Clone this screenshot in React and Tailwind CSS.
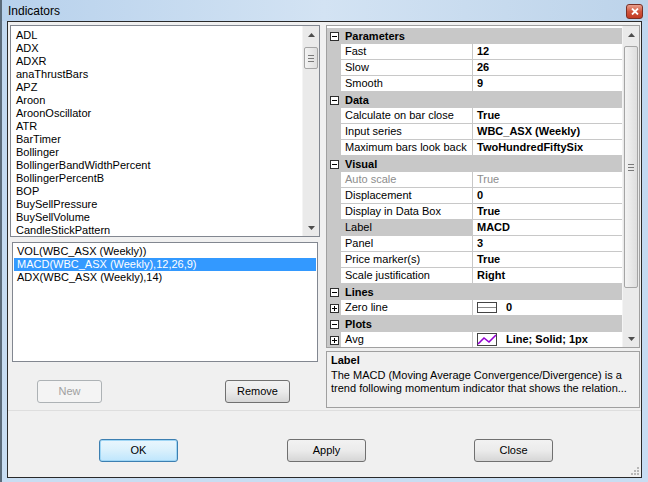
import React from "react";

const INDICATORS = [
  "ADL",
  "ADX",
  "ADXR",
  "anaThrustBars",
  "APZ",
  "Aroon",
  "AroonOscillator",
  "ATR",
  "BarTimer",
  "Bollinger",
  "BollingerBandWidthPercent",
  "BollingerPercentB",
  "BOP",
  "BuySellPressure",
  "BuySellVolume",
  "CandleStickPattern",
];

const APPLIED = [
  "VOL(WBC_ASX (Weekly))",
  "MACD(WBC_ASX (Weekly),12,26,9)",
  "ADX(WBC_ASX (Weekly),14)",
];

const PROPS = [
  { cat: "Parameters" },
  { name: "Fast", value: "12" },
  { name: "Slow", value: "26" },
  { name: "Smooth", value: "9" },
  { cat: "Data" },
  { name: "Calculate on bar close", value: "True" },
  { name: "Input series", value: "WBC_ASX (Weekly)" },
  { name: "Maximum bars look back", value: "TwoHundredFiftySix" },
  { cat: "Visual" },
  { name: "Auto scale", value: "True", disabled: true },
  { name: "Displacement", value: "0" },
  { name: "Display in Data Box", value: "True" },
  { name: "Label", value: "MACD", selected: true },
  { name: "Panel", value: "3" },
  { name: "Price marker(s)", value: "True" },
  { name: "Scale justification", value: "Right" },
  { cat: "Lines" },
  { name: "Zero line", value: "0", expand: true, icon: "line" },
  { cat: "Plots" },
  { name: "Avg", value: "Line; Solid; 1px", expand: true, icon: "plot" },
];

function Arrow({ down }) {
  return (
    <svg width="7" height="4" viewBox="0 0 7 4">
      <path d={down ? "M0 0h7L3.5 4z" : "M0 4h7L3.5 0z"} fill="#4d4d4d" />
    </svg>
  );
}

function ScrollBar({ thumbTop, thumbHeight }) {
  return (
    <div className="relative flex h-full w-[17px] shrink-0 flex-col items-center bg-[#eaeaea] border-l border-[#f4f4f4]">
      <div className="flex h-[17px] w-full items-center justify-center">
        <Arrow />
      </div>
      <div
        className="absolute left-[1px] w-[14px] rounded-[2px] border border-[#a5a5a5] bg-gradient-to-r from-[#f3f3f3] to-[#dedede] flex flex-col items-center justify-center gap-[2px]"
        style={{ top: thumbTop, height: thumbHeight }}
      >
        <div className="h-px w-[6px] bg-[#7a7a7a]" />
        <div className="h-px w-[6px] bg-[#7a7a7a]" />
        <div className="h-px w-[6px] bg-[#7a7a7a]" />
      </div>
      <div className="mt-auto flex h-[17px] w-full items-center justify-center">
        <Arrow down />
      </div>
    </div>
  );
}

function BoxSign({ plus }) {
  return (
    <div className="relative h-[9px] w-[9px] border border-[#2f2f2f] bg-white">
      <div className="absolute left-[1px] top-[3px] h-px w-[5px] bg-black" />
      {plus ? <div className="absolute left-[3px] top-[1px] h-[5px] w-px bg-black" /> : null}
    </div>
  );
}

function WinButton({ children, className = "", disabled, focused }) {
  return (
    <div
      className={
        "flex h-[23px] items-center justify-center rounded-[3px] border text-[11px] " +
        (disabled
          ? "border-[#adb2b5] bg-[#f4f4f4] text-[#a0a0a0] "
          : focused
          ? "border-[#3c7fb1] bg-gradient-to-b from-[#eaf6fd] via-[#d9f0fc] to-[#bee6fd] text-black shadow-[inset_0_0_0_1px_#9fd6f5] "
          : "border-[#707070] bg-gradient-to-b from-[#f2f2f2] via-[#ebebeb] to-[#d6d6d6] text-black ") +
        className
      }
    >
      {children}
    </div>
  );
}

export default function App() {
  return (
    <div className="relative h-[482px] w-[648px] overflow-hidden bg-gradient-to-b from-[#c0d7ef] to-[#c8ddf2] font-['Liberation_Sans',Arial,sans-serif] text-black">
      <div className="absolute left-0 top-0 h-full w-[2px] bg-[#5b6b7a]" />
      {/* title bar */}
      <div className="flex h-[21px] items-center bg-gradient-to-r from-[#b7d1ec] via-[#d3e3f3] to-[#bcd3ea] pl-[8px] pt-px text-[12px]">
        Indicators
      </div>
      <div className="absolute left-[626px] top-[4px] flex h-[15px] w-[17px] items-center justify-center rounded-[3px] border border-[#7a2f25] bg-gradient-to-b from-[#e8a08f] via-[#d0553d] to-[#c23a22]">
        <svg width="8" height="7" viewBox="0 0 8 7">
          <path d="M1 0.5L7 6.5M7 0.5L1 6.5" stroke="#fff" strokeWidth="1.8" />
        </svg>
      </div>

      {/* dialog body */}
      <div className="relative ml-[7px] mr-[6px] flex h-[457px] flex-col border border-[#2a2a2a] bg-[#f0f0f0]">
        <div className="flex h-[389px] border-b border-[#dedede]">
          {/* left pane */}
          <div className="ml-[2px] flex w-[310px] flex-col">
            <div className="mt-[3px] flex h-[212px] border border-[#828790] bg-white">
              <div className="flex-1 overflow-hidden pl-[5px] pt-[3px] text-[11px] leading-[13px]">
                {INDICATORS.map((item) => (
                  <div key={item} className="whitespace-nowrap">
                    {item}
                  </div>
                ))}
              </div>
              <ScrollBar thumbTop={21} thumbHeight={22} />
            </div>
            <div className="ml-[2px] mt-[5px] h-[120px] w-[306px] border border-[#828790] bg-white px-px pt-[2px] text-[11px] leading-[13px]">
              {APPLIED.map((item, index) => (
                <div
                  key={item}
                  className={
                    "whitespace-nowrap pl-[3px] " +
                    (index === 1 ? "bg-[#3399ff] text-white" : "")
                  }
                >
                  {item}
                </div>
              ))}
            </div>
            <div className="mt-[18px] flex">
              <WinButton disabled className="ml-[27px] w-[65px]">
                New
              </WinButton>
              <WinButton className="ml-[123px] w-[65px]">Remove</WinButton>
            </div>
          </div>

          {/* right pane */}
          <div className="ml-[6px] flex w-[314px] flex-col">
            <div className="mt-[3px] flex h-[323px] border border-[#a0a0a0] bg-white">
              <div className="flex-1 overflow-hidden pt-[2px] text-[11px]">
                {PROPS.map((row) =>
                  row.cat ? (
                    <div
                      key={row.cat}
                      className="flex h-[16px] items-center bg-[#c8c8c8] font-bold"
                    >
                      <div className="flex w-[14px] justify-center">
                        <BoxSign />
                      </div>
                      <span className="pl-[4px]">{row.cat}</span>
                    </div>
                  ) : (
                    <div key={row.name} className="flex h-[16px]">
                      <div className="flex w-[14px] shrink-0 items-center justify-center bg-[#c8c8c8]">
                        {row.expand ? <BoxSign plus /> : null}
                      </div>
                      <div
                        className={
                          "flex w-[132px] shrink-0 items-center border-b border-r border-[#c8c8c8] pl-[4px] whitespace-nowrap " +
                          (row.selected ? "bg-[#c8c8c8] " : "bg-white ") +
                          (row.disabled ? "text-[#8d8d8d]" : "")
                        }
                      >
                        {row.name}
                      </div>
                      <div
                        className={
                          "flex flex-1 items-center border-b border-[#c8c8c8] pl-[4px] whitespace-nowrap " +
                          (row.disabled ? "text-[#8d8d8d]" : "font-bold")
                        }
                      >
                        {row.icon === "line" ? (
                          <div className="mr-[9px] flex h-[11px] w-[20px] items-center border border-[#444] bg-white">
                            <div className="h-px w-full bg-[#888]" />
                          </div>
                        ) : null}
                        {row.icon === "plot" ? (
                          <svg className="mr-[9px]" width="20" height="13" viewBox="0 0 20 13">
                            <rect x="0.5" y="0.5" width="19" height="12" fill="#fff" stroke="#444" />
                            <path d="M1 11L7 5L12 9L19 2" stroke="#9400d3" strokeWidth="1.6" fill="none" />
                          </svg>
                        ) : null}
                        {row.value}
                      </div>
                    </div>
                  )
                )}
              </div>
              <ScrollBar thumbTop={20} thumbHeight={242} />
            </div>
            <div className="mt-[3px] h-[57px] border border-[#a0a0a0] bg-[#f0f0f0] px-[4px] pt-[2px] text-[11px] leading-[13px]">
              <div className="font-bold">Label</div>
              <div className="mt-[2px]">
                The MACD (Moving Average Convergence/Divergence) is a
              </div>
              <div className="whitespace-nowrap">
                trend following momentum indicator that shows the relation...
              </div>
            </div>
          </div>
        </div>

        {/* bottom buttons */}
        <div className="mt-[28px] flex">
          <WinButton focused className="ml-[91px] w-[79px]">
            OK
          </WinButton>
          <WinButton className="ml-[109px] w-[79px]">Apply</WinButton>
          <WinButton className="ml-[108px] w-[79px]">Close</WinButton>
        </div>

        <div className="absolute bottom-[2px] right-[2px] grid grid-cols-3 gap-px">
          <div className="h-[2px] w-[2px]" />
          <div className="h-[2px] w-[2px]" />
          <div className="h-[2px] w-[2px] bg-[#b8b8b8]" />
          <div className="h-[2px] w-[2px]" />
          <div className="h-[2px] w-[2px] bg-[#b8b8b8]" />
          <div className="h-[2px] w-[2px] bg-[#b8b8b8]" />
          <div className="h-[2px] w-[2px] bg-[#b8b8b8]" />
          <div className="h-[2px] w-[2px] bg-[#b8b8b8]" />
          <div className="h-[2px] w-[2px] bg-[#b8b8b8]" />
        </div>
      </div>
    </div>
  );
}
